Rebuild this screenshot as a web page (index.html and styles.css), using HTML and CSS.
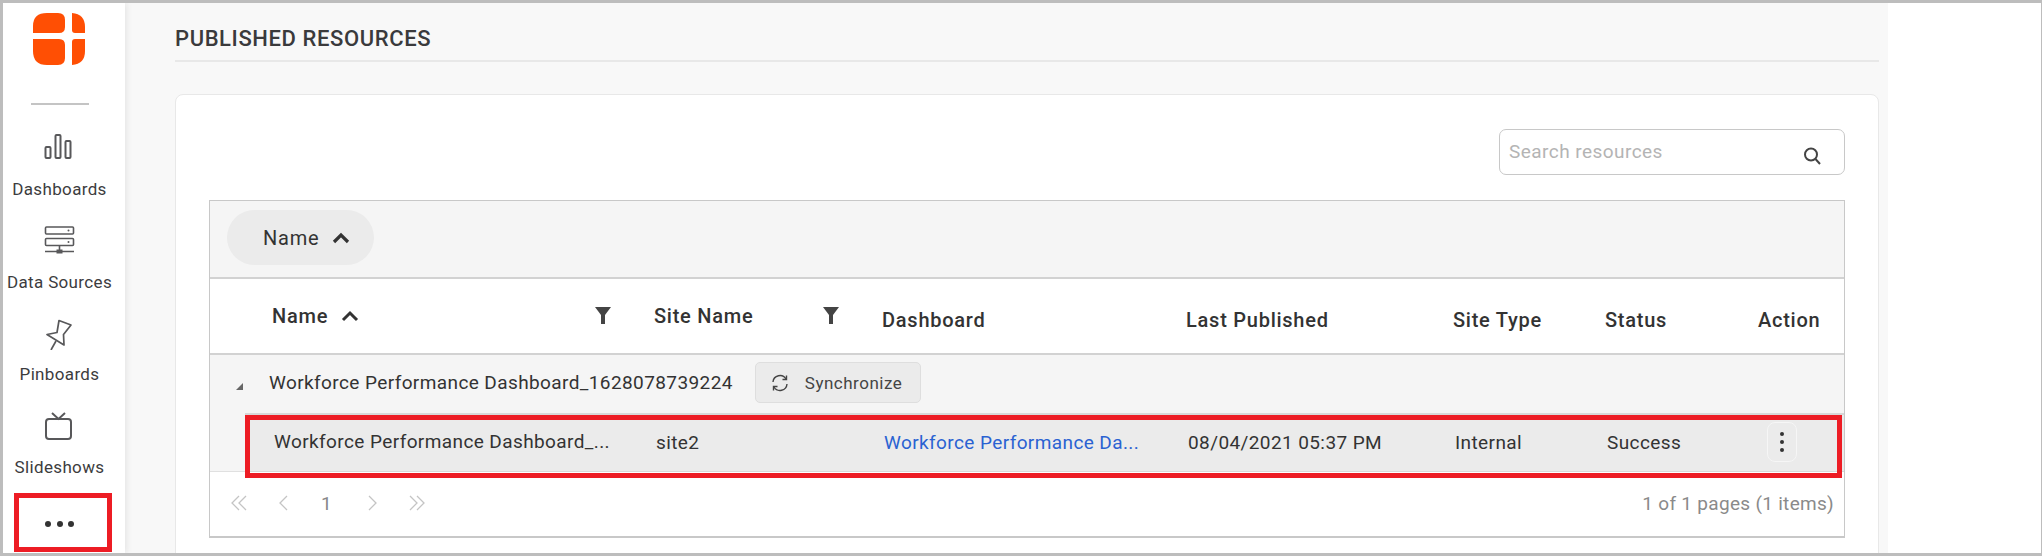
FILE: index.html
```html
<!DOCTYPE html>
<html lang="en">
<head>
<meta charset="utf-8">
<title>Published Resources</title>
<link rel="stylesheet" href="styles.css">
</head>
<body>
<div class="frame">
  <nav class="sidebar">
    <svg class="logo" width="54" height="54" viewBox="0 0 54 54">
      <path fill="#ff4f04" d="M0 14Q0 1 14 1H25Q32 1 32 8V15Q32 21 26 21H0Z"/>
      <path fill="#ff4f04" d="M39 1Q52 2 52 15V21H42Q39 21 39 18Z"/>
      <path fill="#ff4f04" d="M0 27H26Q32 27 32 33V46Q32 53 25 53H14Q0 53 0 39Z"/>
      <path fill="#ff4f04" d="M42 27H52V39Q52 52 39 53V30Q39 27 42 27Z"/>
    </svg>
    <div class="side-rule"></div>
    <a class="side-item">
      <svg class="side-icon" width="32" height="32" viewBox="0 0 32 32" fill="none" stroke="#58585a" stroke-width="2"><rect x="1.500" y="14" width="5" height="11" rx="1"/><rect x="11.500" y="2" width="5" height="23" rx="1"/><rect x="21.500" y="8" width="5" height="17" rx="1"/></svg>
      <span>Dashboards</span>
    </a>
    <a class="side-item">
      <svg class="side-icon" width="32" height="32" viewBox="0 0 32 32" fill="none" stroke="#58585a" stroke-width="1.600"><rect x="1.500" y="1" width="28" height="7" rx="1"/><rect x="1.500" y="12.500" width="28" height="7" rx="1"/><path d="M1 25.500H30M15.500 20V25"/><rect x="12.500" y="23.500" width="6" height="4" fill="#58585a" stroke="none"/><circle cx="24.500" cy="4.500" r="1" fill="#58585a" stroke="none"/><circle cx="24.500" cy="16" r="1" fill="#58585a" stroke="none"/></svg>
      <span>Data Sources</span>
    </a>
    <a class="side-item">
      <svg class="side-icon" width="32" height="32" viewBox="0 0 32 32" fill="none" stroke="#58585a" stroke-width="1.700" stroke-linejoin="round"><path d="M3 16.500 13 14.500 15 2.500 27 7 19.500 16.500 20 27 3 16.500Z"/><path d="M7 32 12 23"/></svg>
      <span>Pinboards</span>
    </a>
    <a class="side-item">
      <svg class="side-icon" width="32" height="32" viewBox="0 0 32 32" fill="none" stroke="#58585a" stroke-width="2"><rect x="2" y="8" width="25" height="20" rx="3"/><path d="M8 2 14.500 8 21 2"/></svg>
      <span>Slideshows</span>
    </a>
    <div class="side-more"><i></i><i></i><i></i></div>
  </nav>

  <main class="panel">
    <h1 class="title">PUBLISHED RESOURCES</h1>
    <section class="card">
      <div class="search-row">
        <div class="search">
          <span>Search resources</span>
          <svg width="20" height="20" viewBox="0 0 20 20" fill="none" stroke="#444" stroke-width="2"><circle cx="8" cy="8.500" r="6"/><path d="M12.500 13 17 18"/></svg>
        </div>
      </div>
      <div class="grid">
        <div class="toolbar">
          <div class="chip">Name
            <svg width="18" height="12" viewBox="0 0 18 12" fill="none" stroke="#333" stroke-width="3.200"><path d="M2 10 9 3 16 10"/></svg>
          </div>
        </div>
        <div class="cols head">
          <div class="th th-up">Name
            <svg class="chev" width="18" height="12" viewBox="0 0 18 12" fill="none" stroke="#333" stroke-width="3"><path d="M2 10 9 3 16 10"/></svg>
            <svg class="filter" width="16" height="17" viewBox="0 0 16 17"><path fill="#444" d="M0 0H16L10 8V17H6V8Z"/></svg>
          </div>
          <div class="th th-up">Site Name
            <svg class="filter" width="16" height="17" viewBox="0 0 16 17"><path fill="#444" d="M0 0H16L10 8V17H6V8Z"/></svg>
          </div>
          <div class="th">Dashboard</div>
          <div class="th">Last Published</div>
          <div class="th">Site Type</div>
          <div class="th">Status</div>
          <div class="th">Action</div>
        </div>
        <div class="group">
          <div class="group-head">
            <span class="caret"></span>
            <span class="group-name">Workforce Performance Dashboard_1628078739224</span>
            <button class="sync">
              <svg width="18" height="18" viewBox="0 0 18 18" fill="none" stroke="#444" stroke-width="1.400"><path d="M2 8A7 7 0 0 1 15 5M16 10A7 7 0 0 1 3 13"/><path d="M15.500 1.500V5.500H11.500M2.500 16.500V12.500H6.500"/></svg>
              Synchronize
            </button>
          </div>
          <div class="cols row">
            <div class="td td-name">Workforce Performance Dashboard_...</div>
            <div class="td">site2</div>
            <div class="td link">Workforce Performance Da...</div>
            <div class="td">08/04/2021 05:37 PM</div>
            <div class="td">Internal</div>
            <div class="td">Success</div>
            <div class="td"><span class="kebab"><i></i><i></i><i></i></span></div>
          </div>
        </div>
        <div class="pager">
          <div class="pages">
            <svg width="20" height="18" viewBox="0 0 20 18" fill="none" stroke="#c4c4c4" stroke-width="1.300"><path d="M9 2 2 9 9 16M16 2 9 9 16 16"/></svg>
            <svg class="prev" width="12" height="18" viewBox="0 0 12 18" fill="none" stroke="#c4c4c4" stroke-width="1.300"><path d="M9 2 2 9 9 16"/></svg>
            <span class="num">1</span>
            <svg class="next" width="12" height="18" viewBox="0 0 12 18" fill="none" stroke="#c4c4c4" stroke-width="1.300"><path d="M3 2 10 9 3 16"/></svg>
            <svg class="last" width="20" height="18" viewBox="0 0 20 18" fill="none" stroke="#c4c4c4" stroke-width="1.300"><path d="M4 2 11 9 4 16M11 2 18 9 11 16"/></svg>
          </div>
          <div class="count">1 of 1 pages (1 items)</div>
        </div>
        <div class="mark mark-row"></div>
      </div>
    </section>
  </main>
  <div class="mark mark-more"></div>
</div>
</body>
</html>
```
FILE: styles.css
```css
* { box-sizing: border-box; }
html, body { margin: 0; height: 100%; overflow: hidden; }
body { background: #fff; font-family: Roboto, "Liberation Sans", sans-serif; color: #333; }
.frame {
  position: relative;
  display: flex;
  width: 2042px;
  height: 556px;
  border: 3px solid #bdbdbd;
  border-right-width: 1px;
  overflow: hidden;
}
.sidebar {
  width: 122px;
  flex: none;
  padding-right: 9px;
  background: #fff;
  box-shadow: 2px 0 6px rgba(0, 0, 0, .08);
  display: flex;
  flex-direction: column;
  align-items: center;
  position: relative;
  z-index: 1;
}
.logo { margin-top: 9px; flex: none; }
.side-rule { width: 58px; height: 2px; background: #c4c4c4; margin-top: 37px; flex: none; }
.side-item {
  height: 93px;
  flex: none;
  display: flex;
  flex-direction: column;
  align-items: center;
  width: 100%;
  font-size: 17px;
  letter-spacing: .35px;
  color: #3c3c3e;
  white-space: nowrap;
}
.side-item:nth-of-type(1) { margin-top: 28px; }
.side-item:nth-of-type(2) { height: 92px; }
.side-icon { flex: none; margin-bottom: 14px; }
.side-more { display: flex; gap: 5.500px; margin-top: 17px; }
.side-more i { width: 6px; height: 6px; border-radius: 50%; background: #333; }

.panel {
  width: 1763px;
  flex: none;
  background: #f8f8f8;
  padding: 0 9px 0 50px;
}
.title {
  margin: 0;
  height: 59px;
  padding-top: 21px;
  font-size: 22px;
  line-height: 30px;
  font-weight: 500;
  letter-spacing: .6px;
  color: #3a3a3c;
  border-bottom: 2px solid #e8e8e8;
  white-space: nowrap;
}
.card {
  margin-top: 32px;
  height: 520px;
  background: #fff;
  border: 1px solid #e8e8e8;
  border-radius: 8px;
  padding: 34px 33px 0 33px;
}
.search-row { display: flex; justify-content: flex-end; }
.search {
  width: 346px;
  height: 46px;
  border: 1px solid #c8c8c8;
  border-radius: 7px;
  display: flex;
  justify-content: space-between;
  padding: 0 21px 0 9px;
  font-size: 19px;
  line-height: 44px;
  color: #b4b4b4;
  letter-spacing: .45px;
}
.search svg { margin-top: 16px; }
.grid {
  position: relative;
  margin-top: 25px;
  width: 1636px;
  height: 338px;
  border: 1px solid #c8c8c8;
  border-bottom-width: 2px;
}
.toolbar {
  height: 78px;
  background: #f5f5f5;
  border-bottom: 2px solid #d2d2d2;
  padding: 9px 0 0 17px;
}
.chip {
  width: 147px;
  height: 55px;
  border-radius: 28px;
  background: #ebebeb;
  display: flex;
  align-items: center;
  padding-left: 36px;
  gap: 13px;
  font-size: 20px;
  letter-spacing: .75px;
}
.cols { display: grid; grid-template-columns: 444px 228px 304px 267px 152px 153px 1fr; }
.head { height: 76px; border-bottom: 2px solid #d2d2d2; background: #fff; }
.th {
  position: relative;
  display: flex;
  align-items: center;
  gap: 13px;
  padding-top: 8px;
  font-size: 20px;
  font-weight: 500;
  letter-spacing: .75px;
  color: #333;
  white-space: nowrap;
}
.th:first-child { padding-left: 62px; }
.th-up { padding-top: 0; }
.filter { position: absolute; top: 28px; }
.th:nth-child(1) .filter { left: 385px; }
.th:nth-child(2) .filter { left: 169px; }
.group { background: #f5f5f5; height: 117px; border-bottom: 1px solid #e0e0e0; }
.group-head { height: 58px; display: flex; align-items: center; }
.caret {
  margin-left: 26px;
  width: 0;
  height: 0;
  border-left: 7px solid transparent;
  border-bottom: 7px solid #666;
  margin-top: 4px;
}
.group-name { margin-left: 26px; font-size: 19px; letter-spacing: .4px; margin-top: -3px; white-space: nowrap; }
.sync {
  margin-left: 22px;
  margin-top: -3px;
  width: 166px;
  height: 41px;
  background: #ebebeb;
  border: 1px solid #dedede;
  border-radius: 5px;
  display: flex;
  align-items: center;
  gap: 16px;
  padding: 0 0 0 15px;
  font: 17px Roboto, sans-serif;
  letter-spacing: .5px;
  color: #444;
}
.row {
  height: 59px;
  margin-left: 35px;
  grid-template-columns: 410px 228px 304px 267px 152px 153px 1fr;
  background: #ebebeb;
  border-top: 2px solid #d8d8d8;
  border-left: 1px solid #d8d8d8;
  border-bottom: 1px solid #d8d8d8;
}
.td {
  display: flex;
  align-items: center;
  padding-bottom: 2px;
  font-size: 19px;
  letter-spacing: .4px;
  color: #333;
  white-space: nowrap;
}
.td-name { padding-left: 28px; padding-bottom: 4px; }
.link { color: #2a62d2; }
.kebab {
  width: 30px;
  height: 40px;
  margin-left: 7px;
  border: 1px solid #f6f6f6;
  border-radius: 8px;
  display: flex;
  flex-direction: column;
  align-items: center;
  justify-content: center;
  gap: 4px;
}
.kebab i { width: 4px; height: 4px; border-radius: 50%; background: #333; }
.pager {
  height: 64px;
  display: flex;
  justify-content: space-between;
  align-items: center;
  padding: 0 10px 2px 20px;
}
.pages { display: flex; align-items: center; color: #888; font-size: 19px; }
.prev { margin-left: 28px; }
.num { margin-left: 31px; }
.next { margin-left: 34px; }
.last { margin-left: 28px; }
.count { font-size: 19px; color: #8a8a8a; letter-spacing: .3px; }
.mark { position: absolute; border: 5px solid #ed1c24; pointer-events: none; }
.mark-row { left: 35px; top: 214px; width: 1597px; height: 63px; }
.mark-more { left: 11px; top: 490px; width: 98px; height: 59px; z-index: 2; }
```
